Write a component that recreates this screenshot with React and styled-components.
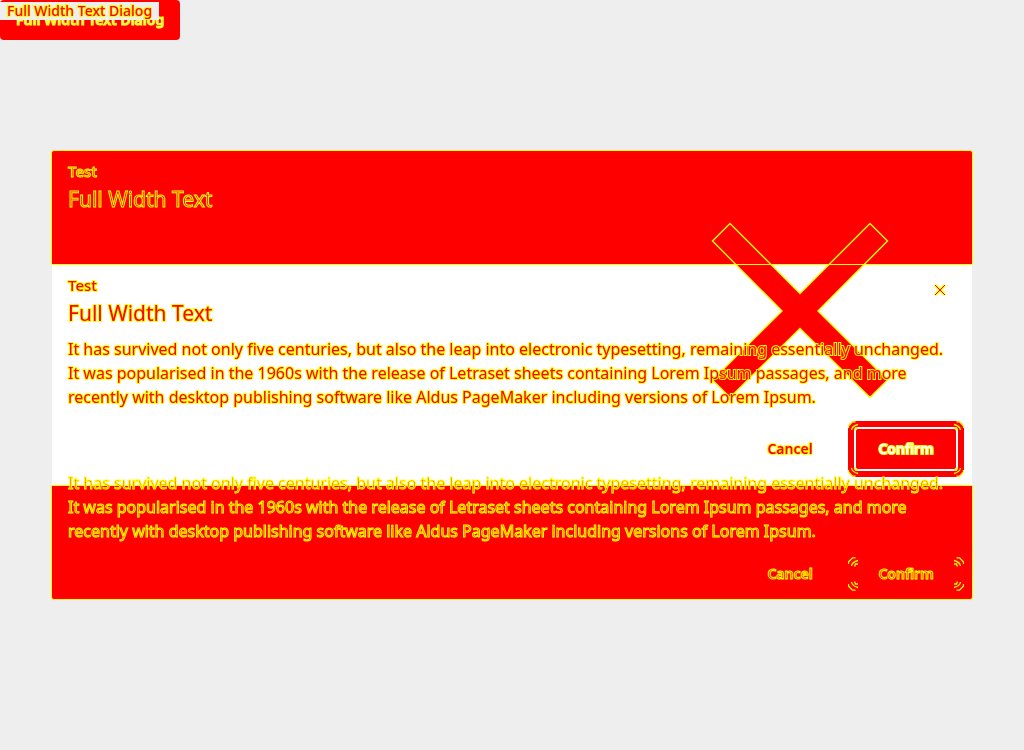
import React from "react";
import styled, { createGlobalStyle, css } from "styled-components";

const RED = "#ff0000";
const YELLOW = "#ffff00";
const GREY = "#eeeeee";

const GlobalStyle = createGlobalStyle`
  * { box-sizing: border-box; }
  body {
    margin: 0;
    background: ${GREY};
    font-family: "Noto Sans", "Open Sans", sans-serif;
  }
  button { font-family: inherit; cursor: pointer; }
`;

const traced = css`
  color: ${(p) => p.$fill || RED};
  -webkit-text-stroke: ${(p) => (p.$ghost ? "1px" : "2px")} ${YELLOW};
  paint-order: ${(p) => (p.$ghost ? "fill stroke" : "stroke fill")};
`;

const Trigger = styled.button`
  display: block;
  height: 40px;
  padding: 0 16px;
  border: 0;
  border-radius: 4px;
  background: ${RED};
  font-size: 14px;
  font-weight: 600;
  line-height: 40px;
  white-space: nowrap;
  color: ${GREY};
  -webkit-text-stroke: 1px ${YELLOW};
`;

const TriggerTag = styled.button`
  position: absolute;
  top: 2px;
  left: 0;
  height: 18px;
  padding: 0 7px;
  border: 0;
  background: ${GREY};
  font-size: 14px;
  font-weight: 500;
  line-height: 18px;
  white-space: nowrap;
  ${traced}
`;

const TriggerArea = styled.header`
  position: relative;
  width: fit-content;
`;

const Overlay = styled.main`
  position: fixed;
  inset: 0;
  display: grid;
  align-items: center;
  padding: 0 51px;
  pointer-events: none;
`;

const Stack = styled.div`
  position: relative;
  display: grid;
  min-height: 450px;
  border: 1px solid ${YELLOW};
  border-radius: 3px;
  background: ${RED};
  pointer-events: auto;
`;

const Dialog = styled.section`
  position: relative;
  grid-area: 1 / 1;
  display: flex;
  flex-direction: column;
  padding: 8px 0;
  ${(p) =>
    p.$solid
      ? css`
          align-self: center;
          margin: 0 -1px;
          border: 1px solid ${GREY};
          border-top-color: ${YELLOW};
          border-bottom-color: ${YELLOW};
          background: #ffffff;
        `
      : css`
          justify-content: space-between;
          pointer-events: none;
        `}
`;

const Heading = styled.header`
  position: relative;
  z-index: 1;
  display: grid;
  grid-template-columns: 1fr auto;
  padding: 0 16px;
`;

const Label = styled.p`
  margin: 0;
  font-size: 15px;
  font-weight: 500;
  line-height: 24px;
  ${traced}
`;

const Title = styled.h2`
  margin: 0;
  font-size: 21px;
  font-weight: 400;
  line-height: 32px;
  ${traced}
`;

const Close = styled.button`
  display: grid;
  place-items: center;
  width: 32px;
  height: 34px;
  padding: 0;
  border: 0;
  background: transparent;
`;

const Body = styled.p`
  position: relative;
  z-index: 1;
  margin: 8px 0 ${(p) => (p.$ghost ? 14 : 12)}px;
  padding: 0 16px;
  font-size: 16px;
  line-height: 24px;
  ${traced}
`;

const Footer = styled.footer`
  display: flex;
  justify-content: flex-end;
  align-items: center;
  gap: 20px;
  padding: 0 8px;
`;

const Action = styled.button`
  position: relative;
  height: ${(p) => (p.$focused ? 56 : 34)}px;
  min-width: ${(p) => (p.$primary ? 116 : 76)}px;
  padding: 0 0 2px;
  border: 0;
  border-radius: 8px;
  background: ${(p) => (p.$focused ? RED : "transparent")};
  font-size: 14px;
  font-weight: 600;
  ${traced}
`;

const FocusRing = styled.span`
  position: absolute;
  inset: 6px;
  border: 2px solid #ffffff;
  border-radius: 4px;
`;

const Corner = styled.svg`
  position: absolute;
  ${(p) => (p.$bottom ? "bottom: 0;" : "top: 0;")}
  ${(p) => (p.$right ? "right: 0;" : "left: 0;")}
  transform: scale(${(p) => (p.$right ? -1 : 1)}, ${(p) => (p.$bottom ? -1 : 1)});
`;

const Cross = styled.svg`
  position: absolute;
  top: 71px;
  right: 83px;
`;

const corners = [
  [false, false],
  [true, false],
  [false, true],
  [true, true],
];

function Corners() {
  return corners.map(([right, bottom]) => (
    <Corner
      key={`${right}${bottom}`}
      $right={right}
      $bottom={bottom}
      width="12"
      height="12"
      viewBox="0 0 12 12"
      fill="none"
      stroke={YELLOW}
      strokeWidth="1.3"
      aria-hidden="true"
    >
      <path d="M.5 7V5L4.500 .8H7.500M3.500 9C4 6 6 4.500 10 3.500M6.500 9.500L7.500 7H10" />
    </Corner>
  ));
}

const bodyText =
  "It has survived not only five centuries, but also the leap into electronic typesetting, remaining essentially unchanged. It was popularised in the 1960s with the release of Letraset sheets containing Lorem Ipsum passages, and more recently with desktop publishing software like Aldus PageMaker including versions of Lorem Ipsum.";

function Actions({ focused }) {
  return (
    <Footer>
      <Action $ghost={!focused}>Cancel</Action>
      <Action $primary $focused={focused} $ghost={!focused} $fill={focused ? "#ffffff" : RED}>
        {focused && <FocusRing />}
        <Corners />
        Confirm
      </Action>
    </Footer>
  );
}

export default function App() {
  return (
    <>
      <GlobalStyle />
      <TriggerArea>
        <Trigger>Full Width Text Dialog</Trigger>
        <TriggerTag>Full Width Text Dialog</TriggerTag>
      </TriggerArea>
      <Overlay>
        <Stack>
          <Dialog $solid role="dialog" aria-labelledby="dialog-title">
            <Heading>
              <div>
                <Label>Test</Label>
                <Title id="dialog-title">Full Width Text</Title>
              </div>
              <Close aria-label="Close">
                <svg width="14" height="14" viewBox="0 0 14 14" fill="none">
                  <path d="M2 2L12 12M12 2L2 12" stroke={YELLOW} strokeWidth="3" />
                  <path d="M2 2L12 12M12 2L2 12" stroke={RED} strokeWidth="1" />
                </svg>
              </Close>
            </Heading>
            <Body>{bodyText}</Body>
            <Actions focused />
          </Dialog>
          <Cross width="178" height="177" viewBox="711 222 178 177" aria-hidden="true">
            <path
              d="M730 223.5L800 293.5L870 223.5L887.500 241L818 311L887.500 380L870 397.500L800 328.500L730 397.500L712.500 380L782 311L712.500 241Z"
              fill={RED}
              stroke={YELLOW}
              strokeWidth="1.4"
            />
            <path d="M711 264.500H889" stroke={YELLOW} />
          </Cross>
          <Dialog>
            <Heading>
              <div>
                <Label $ghost>Test</Label>
                <Title $ghost>Full Width Text</Title>
              </div>
            </Heading>
            <div>
              <Body $ghost>{bodyText}</Body>
              <Actions />
            </div>
          </Dialog>
        </Stack>
      </Overlay>
    </>
  );
}
